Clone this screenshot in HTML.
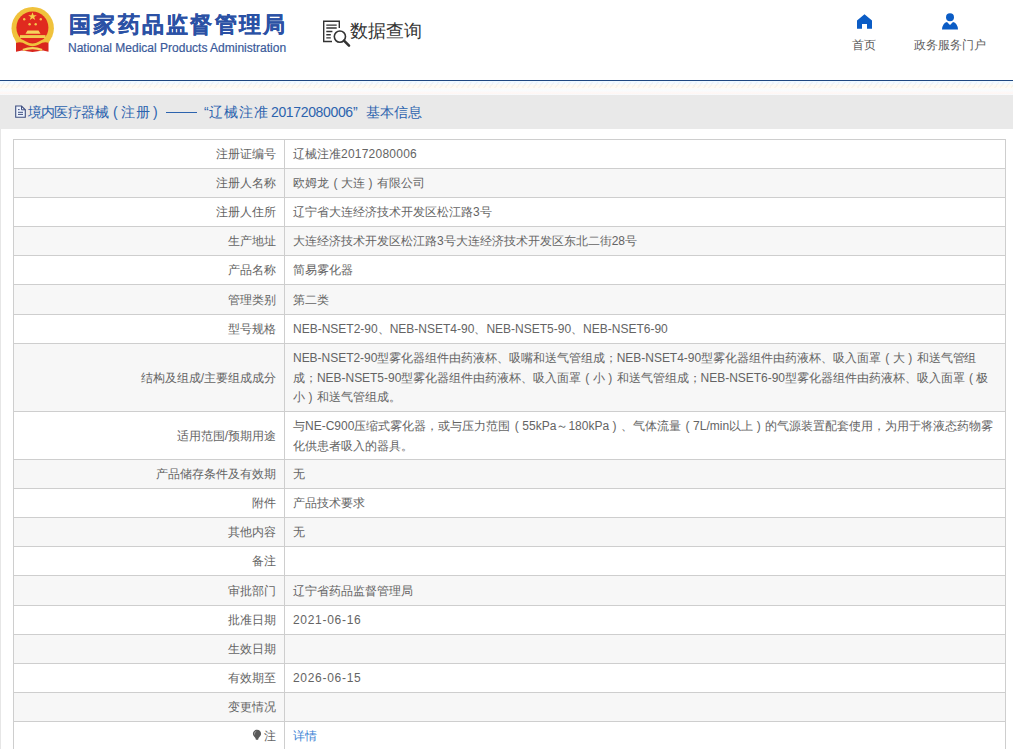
<!DOCTYPE html>
<html><head><meta charset="utf-8">
<style>
*{margin:0;padding:0;box-sizing:border-box}
html,body{width:1013px;height:749px;overflow:hidden;background:#fff}
body{font-family:"Liberation Sans",sans-serif;position:relative;color:#555}
.abs{position:absolute;white-space:nowrap}
#leftstrip{position:absolute;left:0;top:129px;width:1px;height:621px;background:#e6e6e6}
#blueline{position:absolute;left:0;top:80px;width:1013px;height:1px;background:#1f4880}
#hatch{position:absolute;left:0;top:82px;width:1013px;height:6px;background:repeating-linear-gradient(125deg,rgba(120,120,140,0) 0 3px,rgba(120,120,140,.05) 3px 4.5px)}
#stripes{position:absolute;left:0;top:81px;width:1013px;height:14px;
  background:linear-gradient(#eef9ff,#f5fbff 15%,#fffaf0 35%,#fffcf5 50%,#f8fcff 65%,#fff6f3 88%,#f6fbff)}
#band{position:absolute;left:0;top:95px;width:1013px;height:34px;background:#e9e9e9}
#title{position:absolute;left:0;top:103px;width:500px;height:18px;font-size:14px;line-height:18px;color:#2c63ae}
#title span{position:absolute;top:0;white-space:nowrap}
#docicon{position:absolute;left:14px;top:105px}
table{position:absolute;left:13px;top:139px;width:993px;border-collapse:collapse;font-size:12px;line-height:19.5px;color:#646464}
td{border:1px solid #cecece;padding:2px 8px 0 8px;vertical-align:middle;white-space:nowrap}
td.l{width:271px;text-align:right;padding-right:8px}
tr:nth-child(even) td{background:#f7f7f7}
a{color:#3b82d4;text-decoration:none}
b.po,b.pc{display:inline-block;width:12px;font-weight:normal;text-align:center}
b.po{text-indent:1px}
b.pc{text-indent:-1px}
</style></head><body>
<div id="leftstrip"></div>

<!-- emblem -->
<svg class="abs" style="left:0;top:0" width="64" height="58" viewBox="0 0 64 58">
  <circle cx="32.7" cy="28.2" r="21.2" fill="#f0c23c"/>
  <circle cx="32.4" cy="27.6" r="16" fill="#e02a1f"/>
  <path d="M16 42 L16 51.7 L22 50.5 L32.5 52 L43 50.5 L48.5 51.7 L48.5 42 Z" fill="#d9261d"/>
  <polygon points="32.5,12.2 33.6,15.2 36.8,15.2 34.2,17.1 35.2,20.1 32.5,18.3 29.8,20.1 30.8,17.1 28.2,15.2 31.4,15.2" fill="#f6d04a"/>
  <circle cx="24.2" cy="19.3" r="1.2" fill="#f4c64a"/>
  <circle cx="40.8" cy="19.3" r="1.2" fill="#f4c64a"/>
  <circle cx="29.6" cy="24.3" r="1.2" fill="#f4c64a"/>
  <circle cx="35.7" cy="24.3" r="1.2" fill="#f4c64a"/>
  <path d="M25.5 33.8 L27.5 30.6 L38.5 30.6 L40.5 33.8 Z" fill="#f6d45c"/>
  <rect x="20" y="35.1" width="25.5" height="2.9" fill="#f2cc52"/>
  <path d="M15.5 40 Q21 38 26 41.5 Q32.5 45.5 39 41.5 Q44 38 49.5 40 L49 43 Q44 41 39 44.5 Q32.5 48 26 44.5 Q21 41 16 43 Z" fill="#f0c23c"/>
  <path d="M22.4 49 Q32.5 45 42.6 49 L41.5 51 Q32.5 47.5 23.5 51 Z" fill="#f6d45c"/>
</svg>

<div class="abs" style="left:69px;top:11px;font-size:22px;line-height:28px;font-weight:bold;letter-spacing:2.3px;color:#2b51a5;-webkit-text-stroke:0.25px #2b51a5">国家药品监督管理局</div>
<div class="abs" style="left:68px;top:41px;font-size:12px;line-height:14px;color:#3a5a9a;-webkit-text-stroke:0.2px #3a5a9a">National Medical Products Administration</div>

<!-- data query icon -->
<svg class="abs" style="left:318px;top:12px" width="40" height="40" viewBox="0 0 40 40">
  <g fill="none" stroke="#333" stroke-width="1.4">
    <path d="M21.3 16 V9.2 H5.7 V29.5 H14"/>
    <path d="M8.3 13.1 H18.7 M8.3 16 H18.7 M8.3 19.5 H14.4 M8.3 22.7 H12.8 M8.3 25.9 H12.8"/>
    <circle cx="21.9" cy="24.6" r="5.6" stroke-width="1.6"/>
  </g>
  <path d="M26 28.7 L31 33.7" stroke="#333" stroke-width="2.6" stroke-linecap="round"/>
</svg>
<div class="abs" style="left:350px;top:19px;font-size:18px;line-height:24px;color:#333">数据查询</div>

<!-- nav -->
<svg class="abs" style="left:855px;top:13px" width="20" height="18" viewBox="0 0 20 18">
  <path d="M9.5 1.3 L17 7.5 V15.7 H12 V11 H7 V15.7 H2 V7.5 Z" fill="#0b5cc5"/>
</svg>
<div class="abs" style="left:852px;top:38px;font-size:12px;line-height:14px;color:#5c5c5c">首页</div>
<svg class="abs" style="left:940px;top:12px" width="20" height="20" viewBox="0 0 20 20">
  <circle cx="10" cy="5.2" r="4" fill="#0b5cc5"/>
  <path d="M2 17.5 Q2.5 11 7 10 L10 13 L13 10 Q17.5 11 18 17.5 Z" fill="#0b5cc5"/>
</svg>
<div class="abs" style="left:914px;top:38px;font-size:12px;line-height:14px;color:#5c5c5c">政务服务门户</div>

<div id="blueline"></div>
<div id="stripes"></div><div id="hatch"></div>
<div id="band"></div>
<svg id="docicon" width="14" height="15" viewBox="0 0 14 15">
  <path d="M1.7 1 H7.5 L11.3 4.8 V12.3 H1.7 Z" fill="#eef3fc" stroke="#3f4f80" stroke-width="1.1"/>
  <path d="M7.5 1 V4.8 H11.3 M4 4.6 H5.6 M4 7.3 H9 M4 9.4 H9" fill="none" stroke="#3f4f80" stroke-width="1"/>
</svg>
<div id="title">
<span style="left:27.5px;letter-spacing:-0.6px">境内医疗器械</span>
<span style="left:113px">(</span>
<span style="left:121px;letter-spacing:0.5px">注册</span>
<span style="left:153px">)</span>
<i style="position:absolute;left:166px;top:9px;width:31px;height:1px;background:#2c63ae"></i>
<span style="left:204px">&ldquo;</span>
<span style="left:209px;letter-spacing:1.1px">辽械注准</span>
<span style="left:271px;letter-spacing:-0.35px">20172080006</span>
<span style="left:353px">&rdquo;</span>
<span style="left:365.5px;letter-spacing:0px">基本信息</span>
</div>

<table>
<tr style="height:29px"><td class="l">注册证编号</td><td>辽械注准<span style="letter-spacing:0.23px">20172080006</span></td></tr>
<tr style="height:29px"><td class="l">注册人名称</td><td>欧姆龙<b class="po">(</b>大连<b class="pc">)</b>有限公司</td></tr>
<tr style="height:29px"><td class="l">注册人住所</td><td>辽宁省大连经济技术开发区松江路3号</td></tr>
<tr style="height:29px"><td class="l">生产地址</td><td>大连经济技术开发区松江路3号大连经济技术开发区东北二街28号</td></tr>
<tr style="height:29px"><td class="l">产品名称</td><td>简易雾化器</td></tr>
<tr style="height:30px"><td class="l">管理类别</td><td>第二类</td></tr>
<tr style="height:29px"><td class="l">型号规格</td><td>NEB-NSET2-90、NEB-NSET4-90、NEB-NSET5-90、NEB-NSET6-90</td></tr>
<tr style="height:68px"><td class="l">结构及组成/主要组成成分</td><td style="letter-spacing:-0.03px">NEB-NSET2-90型雾化器组件由药液杯、吸嘴和送气管组成；NEB-NSET4-90型雾化器组件由药液杯、吸入面罩<b class="po">(</b>大<b class="pc">)</b>和送气管组<br>成；NEB-NSET5-90型雾化器组件由药液杯、吸入面罩<b class="po">(</b>小<b class="pc">)</b>和送气管组成；NEB-NSET6-90型雾化器组件由药液杯、吸入面罩<b class="po">(</b>极<br>小<b class="pc">)</b>和送气管组成。</td></tr>
<tr style="height:48px"><td class="l">适用范围/预期用途</td><td>与NE-C900压缩式雾化器，或与压力范围<b class="po">(</b>55kPa～180kPa<b class="pc">)</b>、气体流量<b class="po">(</b>7L/min以上<b class="pc">)</b>的气源装置配套使用，为用于将液态药物雾<br>化供患者吸入的器具。</td></tr>
<tr style="height:29px"><td class="l">产品储存条件及有效期</td><td>无</td></tr>
<tr style="height:29px"><td class="l">附件</td><td>产品技术要求</td></tr>
<tr style="height:29px"><td class="l">其他内容</td><td>无</td></tr>
<tr style="height:29px"><td class="l">备注</td><td></td></tr>
<tr style="height:30px"><td class="l">审批部门</td><td>辽宁省药品监督管理局</td></tr>
<tr style="height:29px"><td class="l">批准日期</td><td><span style="letter-spacing:0.7px">2021-06-16</span></td></tr>
<tr style="height:29px"><td class="l">生效日期</td><td></td></tr>
<tr style="height:29px"><td class="l">有效期至</td><td><span style="letter-spacing:0.7px">2026-06-15</span></td></tr>
<tr style="height:29px"><td class="l">变更情况</td><td></td></tr>
<tr style="height:29px"><td class="l"><svg width="10" height="12" viewBox="0 0 10 12" style="vertical-align:-1px;margin-right:2px"><path d="M5 0.8 C2.4 0.8 0.9 2.6 0.9 4.8 C0.9 6.7 2.3 7.7 3.4 9 L3.9 10.8 H6.1 L6.6 9 C7.7 7.7 9.1 6.7 9.1 4.8 C9.1 2.6 7.6 0.8 5 0.8 Z" fill="#5a5a5a"/><path d="M2.6 5.5 C2.3 4 3 2.8 4.2 2.3" stroke="#bbb" stroke-width="0.8" fill="none"/></svg>注</td><td><a>详情</a></td></tr>
</table>
</body></html>
